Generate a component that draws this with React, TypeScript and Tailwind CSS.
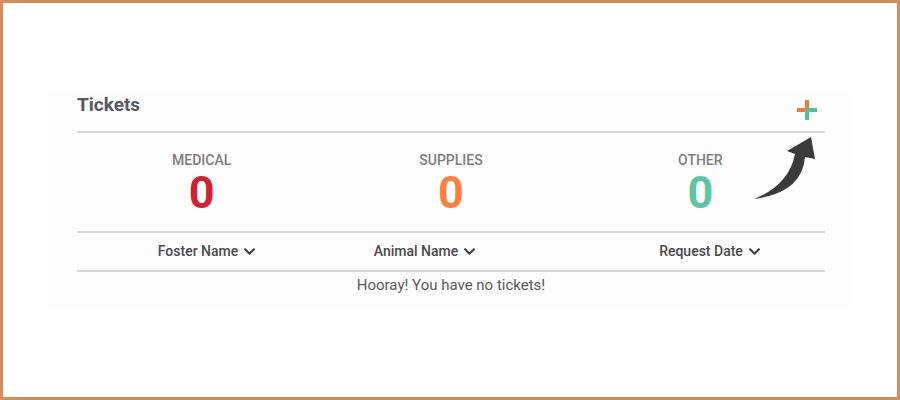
import { FaChevronDown } from "react-icons/fa";

const stats = [
  { label: "MEDICAL", value: 0, color: "text-[#d1202f]" },
  { label: "SUPPLIES", value: 0, color: "text-[#fd7f3e]" },
  { label: "OTHER", value: 0, color: "text-[#5cc5a3]" },
];

function PlusIcon() {
  return (
    <svg width="20" height="20" viewBox="0 0 20 20">
      <rect x="0" y="8" width="10" height="4" fill="#f27a3c" />
      <rect x="8" y="0" width="4" height="10" fill="#f27a3c" />
      <rect x="10" y="8" width="10" height="4" fill="#4fbf9d" />
      <rect x="8" y="10" width="4" height="10" fill="#4fbf9d" />
    </svg>
  );
}

function HeaderCell({ label }: { label: string }) {
  return (
    <div className="flex items-center justify-center gap-[5px] text-[14px] font-medium text-[#4a4a4a]">
      <span>{label}</span>
      <FaChevronDown className="w-[13px] h-[13px] text-[#3d3d3d]" />
    </div>
  );
}

export default function App() {
  return (
    <div
      className="relative w-[900px] h-[400px] border-[3px] border-[#d38d5d] bg-white pt-[90px] pl-[45px]"
      style={{ fontFamily: "Roboto, 'Liberation Sans', sans-serif" }}>
      <div className="w-[802px] h-[213px] bg-[#fdfdfd] pl-[29px] pr-[25px]">
        <div className="flex items-start justify-between border-b-2 border-[#d9d9d9] pb-[11px]">
          <h2 className="mt-[1px] text-[19px] leading-[22px] font-bold text-[#555a5f]">
            Tickets
          </h2>
          <div className="mt-[7px] mr-[8px]">
            <PlusIcon />
          </div>
        </div>

        <div className="grid grid-cols-3 border-b-2 border-[#d9d9d9] pt-[19px] pb-[16px]">
          {stats.map((s) => (
            <div key={s.label} className="flex flex-col items-center">
              <span className="text-[14px] leading-[16px] font-medium text-[#7d7d7d]">
                {s.label}
              </span>
              <span
                className={`mt-[2px] text-[45px] leading-[45px] font-bold ${s.color}`}>
                {s.value}
              </span>
            </div>
          ))}
        </div>

        <div className="grid grid-cols-[260px_176px_82px_230px] h-[39px] items-center border-b-2 border-[#d9d9d9]">
          <HeaderCell label="Foster Name" />
          <HeaderCell label="Animal Name" />
          <div />
          <HeaderCell label="Request Date" />
        </div>

        <p className="pt-[3px] text-center text-[15px] leading-[20px] text-[#5a5a5a]">
          Hooray! You have no tickets!
        </p>
      </div>

      <svg
        className="absolute left-[738px] top-[130px]"
        width="80"
        height="72"
        viewBox="0 0 80 72">
        <path
          d="M13 66 Q61 60 64 24 L74 26 L70 4 L46 18 L54 21 Q48 52 13 66 Z"
          fill="#3b3b3b"
        />
      </svg>
    </div>
  );
}
